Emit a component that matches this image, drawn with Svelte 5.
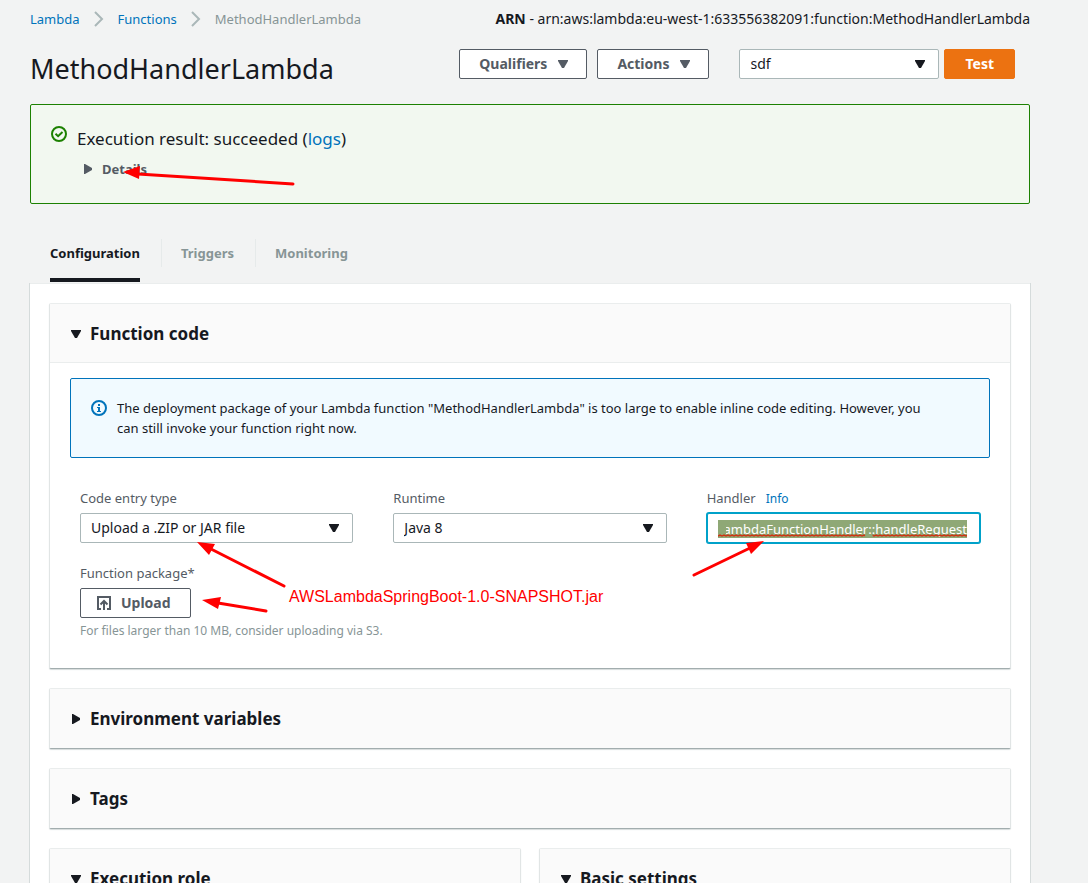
<script>
  import { onMount } from 'svelte';

  let handlerInput;

  onMount(() => {
    handlerInput.focus({ preventScroll: true });
    handlerInput.select();
    handlerInput.scrollLeft = handlerInput.scrollWidth;
  });
</script>

{#snippet caret(direction = 'down')}
  <svg class="caret" width="12" height="12" viewBox="0 0 12 12" aria-hidden="true">
    {#if direction === 'down'}
      <path d="M1 2h10v1L7 10H5L1 3z" />
    {:else}
      <path d="M2 1h1l7 4v2l-7 4H2z" />
    {/if}
  </svg>
{/snippet}

{#snippet chevron()}
  <svg width="10" height="16" viewBox="0 0 10 16" aria-hidden="true">
    <path d="M1 1l7 7-7 7" fill="none" stroke="#aab7b8" stroke-width="2" />
  </svg>
{/snippet}

<div class="page">
  <header>
    <div class="topline">
      <nav class="crumbs" aria-label="Breadcrumb">
        <a href="#lambda">Lambda</a>
        {@render chevron()}
        <a href="#functions">Functions</a>
        {@render chevron()}
        <span>MethodHandlerLambda</span>
      </nav>
      <div class="arn"><b>ARN</b> - arn:aws:lambda:eu-west-1:633556382091:function:MethodHandlerLambda</div>
    </div>
    <div class="titlebar">
      <h1>MethodHandlerLambda</h1>
      <div class="actions">
        <button class="btn">Qualifiers {@render caret()}</button>
        <button class="btn">Actions {@render caret()}</button>
        <div class="select event">
          <select aria-label="Test event"><option>sdf</option></select>
          {@render caret()}
        </div>
        <button class="btn primary">Test</button>
      </div>
    </div>
  </header>

  <section class="result">
    <svg class="status" width="16" height="16" viewBox="0 0 16 16" fill="none" stroke="#1d8102" stroke-width="2" aria-hidden="true">
      <circle cx="8" cy="8" r="7" />
      <path d="M4.5 7.8l2.6 2.4 4.4-4.2" />
    </svg>
    <div>
      <h2>Execution result: succeeded (<a href="#logs">logs</a>)</h2>
      <button class="details">{@render caret('right')} Details</button>
    </div>
  </section>

  <nav class="tabs" aria-label="Function sections">
    <a class="active" href="#configuration">Configuration</a>
    <a href="#triggers">Triggers</a>
    <a href="#monitoring">Monitoring</a>
  </nav>

  <main>
    <section class="card open">
      <h3>{@render caret()} Function code</h3>
      <div class="body">
        <div class="notice">
          <svg width="16" height="16" viewBox="0 0 16 16" aria-hidden="true">
            <circle cx="8" cy="8" r="7" fill="none" stroke="#0073bb" stroke-width="2" />
            <path d="M7 4h2v2H7zM6 7h3v4h1v1H6v-1h1V8H6z" fill="#0073bb" />
          </svg>
          <p>The deployment package of your Lambda function "MethodHandlerLambda" is too large to enable inline code editing. However, you can still invoke your function right now.</p>
        </div>
        <div class="fields">
          <div class="field">
            <label for="entry">Code entry type</label>
            <div class="select">
              <select id="entry"><option>Upload a .ZIP or JAR file</option></select>
              {@render caret()}
            </div>
          </div>
          <div class="field">
            <label for="runtime">Runtime</label>
            <div class="select">
              <select id="runtime"><option>Java 8</option></select>
              {@render caret()}
            </div>
          </div>
          <div class="field">
            <div class="labels">
              <label for="handler">Handler</label>
              <a href="#info">Info</a>
            </div>
            <div class="handler">
              <input id="handler" type="text" spellcheck="false" value="LambdaFunctionHandler::handleRequest" bind:this={handlerInput} />
              <svg class="spelling" height="3" aria-hidden="true">
                <defs>
                  <pattern id="wave" width="4" height="3" patternUnits="userSpaceOnUse">
                    <path d="M0 2l2-1 2 1" fill="none" stroke="#d13212" stroke-width="1.4" />
                  </pattern>
                </defs>
                <rect width="59%" height="3" fill="url(#wave)" />
                <rect x="62%" width="38%" height="3" fill="url(#wave)" />
              </svg>
            </div>
          </div>
        </div>
        <div class="field package">
          <label for="upload">Function package*</label>
          <button class="btn" id="upload">
            <svg width="14" height="14" viewBox="0 0 14 14" fill="none" stroke="#545b64" stroke-width="2" aria-hidden="true">
              <path d="M4 13H1V1h12v12h-3M7 14V5M3.5 8.5L7 5l3.5 3.5" />
            </svg>
            Upload
          </button>
          <small>For files larger than 10 MB, consider uploading via S3.</small>
        </div>
      </div>
    </section>

    <section class="card"><h3>{@render caret('right')} Environment variables</h3></section>
    <section class="card"><h3>{@render caret('right')} Tags</h3></section>
    <div class="pair">
      <section class="card"><h3>{@render caret()} Execution role</h3></section>
      <section class="card"><h3>{@render caret()} Basic settings</h3></section>
    </div>
  </main>

  <svg class="marks" width="1088" height="883" viewBox="0 0 1088 883" aria-hidden="true">
    <g stroke="#f00" stroke-width="3" stroke-linecap="round">
      <path d="M293 184L138 174M284 586L211 549M266 611L218 603M694 575L750 548" />
    </g>
    <path fill="#f00" d="M123 172l17-6-1 13zM197 542l18 2-6 11zM202 600l19-3-3 12zM764 541l-13 13-5-11z" />
  </svg>
  <div class="note">AWSLambdaSpringBoot-1.0-SNAPSHOT.jar</div>
</div>

<style>
  :global(body) {
    margin: 0;
    background: #f2f3f3;
  }

  .page {
    position: relative;
    box-sizing: border-box;
    height: 100vh;
    overflow: hidden;
    padding: 9px 58px 0 30px;
    color: #16191f;
    font: 13px/20px "Noto Sans", sans-serif;
  }

  .page *,
  .page *::before {
    box-sizing: border-box;
  }

  h1, h2, h3, p {
    margin: 0;
  }

  a {
    color: #0073bb;
    text-decoration: none;
  }

  button, select, input {
    font: inherit;
    color: inherit;
  }

  .caret {
    flex: none;
    fill: currentColor;
  }

  .topline, .crumbs, .actions {
    display: flex;
    align-items: center;
  }

  .titlebar {
    display: flex;
  }

  .topline, .titlebar {
    justify-content: space-between;
  }

  .crumbs {
    gap: 14px;
  }

  .crumbs span {
    color: #879596;
  }

  .arn, .btn, .select select {
    font-size: 14px;
  }

  .titlebar {
    align-items: flex-start;
    margin-top: 20px;
    padding-right: 15px;
  }

  h1 {
    font-size: 27px;
    line-height: 40px;
    font-weight: 400;
  }

  .actions {
    gap: 10px;
  }

  .btn {
    display: inline-flex;
    align-items: center;
    justify-content: center;
    gap: 10px;
    height: 30px;
    padding: 0 17px 0 19px;
    border: 1px solid #545b64;
    border-radius: 2px;
    background: #fff;
    color: #545b64;
    font-weight: 700;
  }

  .primary {
    margin-left: -5px;
    padding: 0 20px;
    border-color: #ec7211;
    background: #ec7211;
    color: #fff;
  }

  .select {
    position: relative;
  }

  .event {
    width: 200px;
    margin-left: 20px;
  }

  .select select {
    display: block;
    width: 100%;
    height: 30px;
    padding: 0 32px 0 10px;
    appearance: none;
    border: 1px solid #aab7b8;
    border-radius: 2px;
    background: #fff;
  }

  .select .caret {
    position: absolute;
    top: 9px;
    right: 13px;
    pointer-events: none;
  }

  .result {
    display: flex;
    gap: 10px;
    height: 100px;
    margin-top: 15px;
    padding: 21px 20px;
    border: 1px solid #1d8102;
    border-radius: 2px;
    background: #f2f8f0;
  }

  h2 {
    padding-top: 1px;
    font-size: 17px;
    line-height: 24px;
    font-weight: 400;
  }

  .details {
    display: flex;
    align-items: center;
    gap: 8px;
    margin-top: 8px;
    padding: 0 5px;
    border: 0;
    background: none;
    color: #545b64;
    font-weight: 700;
  }

  .tabs {
    display: flex;
    gap: 41px;
    height: 79px;
    padding: 39px 20px 1px;
  }

  .tabs a {
    position: relative;
    color: #879596;
    font-weight: 700;
  }

  .tabs a + a::before {
    content: "";
    position: absolute;
    top: -4px;
    left: -20px;
    height: 28px;
    border-left: 1px solid #e6eaea;
  }

  .tabs .active {
    border-bottom: 4px solid #16191f;
    color: #16191f;
  }

  main {
    display: grid;
    gap: 19px;
    padding: 19px 20px 40px;
    border-top: 1px solid #eaeded;
    background: #fff;
    box-shadow: -1px 0 #d5dbdb, 1px 0 #d5dbdb;
  }

  .card {
    background: #fff;
    border: 1px solid #e1e5e5;
    border-top-color: #eaeded;
    border-radius: 2px;
    margin: 0 -1px;
    border-bottom-color: #a2adae;
    box-shadow: 0 1px 1px #d5dbdb;
  }

  h3 {
    display: flex;
    align-items: center;
    gap: 8px;
    height: 59px;
    padding: 0 20px;
    background: #fafafa;
    font-size: 17px;
    line-height: 24px;
    font-weight: 700;
  }

  .open h3 {
    padding-top: 2px;
    border-bottom: 1px solid #eaeded;
  }

  .body {
    padding: 15px 20px 27px;
  }

  .notice {
    display: flex;
    gap: 10px;
    padding: 19px 50px 19px 20px;
    border: 1px solid #0073bb;
    border-radius: 2px;
    background: #f1faff;
  }

  .notice svg {
    flex: none;
    margin-top: 2px;
  }

  .fields {
    display: grid;
    grid-template-columns: repeat(3, minmax(0, 1fr));
    gap: 40px;
    padding: 30px 10px 0;
  }

  .field label {
    display: block;
    height: 25px;
    color: #545b64;
  }

  .labels {
    display: flex;
    align-items: baseline;
    gap: 10px;
  }

  .labels a, small {
    font-size: 12px;
  }

  .handler {
    position: relative;
  }

  .handler input {
    display: block;
    width: 100%;
    height: 30px;
    padding: 2px 12px 0 18px;
    border: 1px solid #00a1c9;
    border-radius: 2px;
    outline: 0;
    background: linear-gradient(#8fa876, #8fa876) 10px 6px / 10px 18px no-repeat #fff;
    box-shadow: 0 0 0 1px #00a1c9;
  }

  .handler input::selection {
    background: #8fa876;
    color: #fff;
  }

  .spelling {
    position: absolute;
    bottom: 6px;
    left: 11px;
    width: calc(100% - 24px);
  }

  .package {
    padding: 20px 10px 0;
  }

  .package small {
    display: block;
    margin-top: 3px;
    color: #879596;
  }

  .package .btn {
    padding: 0 19px 0 16px;
  }

  .pair {
    display: grid;
    grid-template-columns: 1fr 1fr;
    gap: 20px;
  }

  .marks {
    position: absolute;
    top: 0;
    left: 0;
    pointer-events: none;
  }

  .note {
    position: absolute;
    top: 587px;
    left: 289px;
    color: #f00;
    font: 16px/20px "Liberation Sans", Arial, sans-serif;
  }
</style>
